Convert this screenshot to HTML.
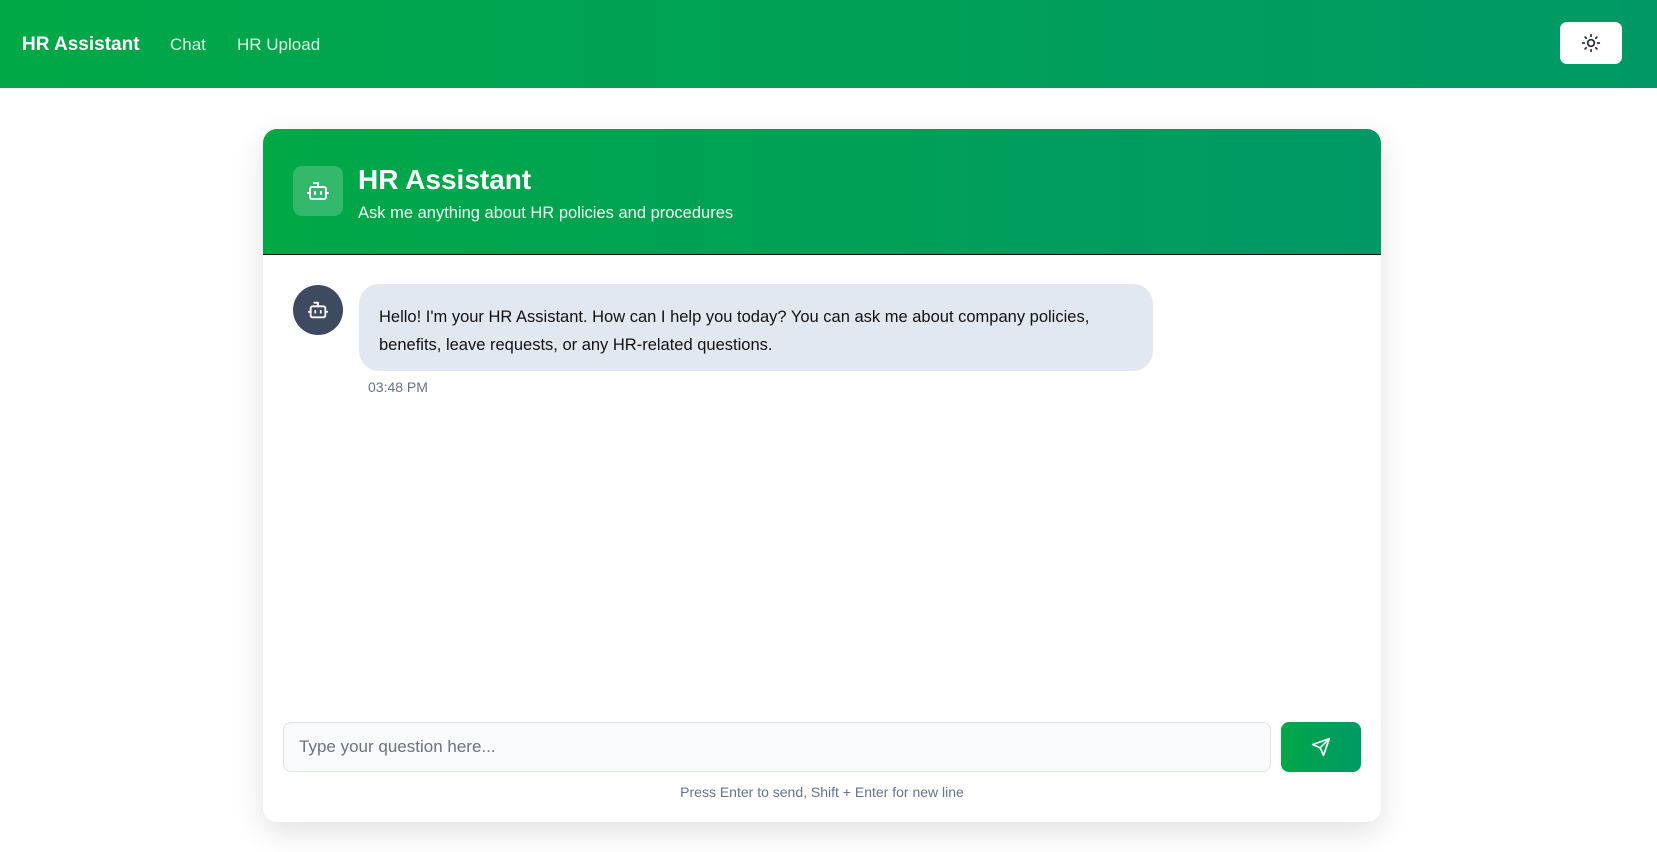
<!DOCTYPE html>
<html><head><style>
*{box-sizing:border-box;margin:0;padding:0}
body{width:1657px;height:852px;background:#fff;font-family:"Liberation Sans",sans-serif;overflow:hidden;position:relative}
.nav{height:88px;background:linear-gradient(90deg,#00a846,#009966);position:relative}
.nav .b{position:absolute;left:22px;top:34px;color:#fff;font-weight:bold;font-size:19px}
.nav .l{position:absolute;top:35px;color:#d6f5e2;font-size:17px}
.tog{position:absolute;left:1560px;top:22px;width:62px;height:42px;background:#fff;border-radius:7px}
.card{position:absolute;left:263px;top:129px;width:1118px;height:693px;background:#fff;border-radius:14px;box-shadow:0 10px 30px rgba(0,0,0,.12);overflow:hidden}
.hd{height:126px;background:linear-gradient(90deg,#00a846,#009966);border-bottom:1px solid #111;position:relative}
.ic{position:absolute;left:30px;top:37px;width:50px;height:50px;border-radius:9px;background:rgba(255,255,255,.2)}
.hd h1{position:absolute;left:95px;top:35px;color:#fff;font-size:28px;font-weight:bold}
.hd p{position:absolute;left:95px;top:75px;color:#eafff2;font-size:16.5px}
.av{position:absolute;left:30px;top:156px;width:50px;height:50px;border-radius:50%;background:#3d4a5f}
.bub{position:absolute;left:96px;top:155px;width:794px;height:87px;background:#e2e8f0;border-radius:20px;padding:19px 20px;font-size:16.5px;line-height:28px;color:#111}
.tm{position:absolute;left:105px;top:250px;font-size:14px;color:#64748b}
.in{position:absolute;left:20px;top:593px;width:988px;height:50px;border:1px solid #dde3ec;background:#f8fafc;border-radius:8px;padding:14px 15px;font-size:17px;color:#6b7280}
.sd{position:absolute;left:1018px;top:593px;width:80px;height:50px;border-radius:8px;background:linear-gradient(90deg,#00a846,#009966)}
.ft{position:absolute;left:0;width:100%;top:655px;text-align:center;font-size:14px;color:#64748b}
</style></head><body>
<div class="nav"><span class="b">HR Assistant</span><span class="l" style="left:170px">Chat</span><span class="l" style="left:237px">HR Upload</span>
<div class="tog"><svg style="position:absolute;left:21px;top:11px" width="20" height="20" viewBox="0 0 24 24" fill="none" stroke="#1e293b" stroke-width="2" stroke-linecap="round"><circle cx="12" cy="12" r="4"/><path d="M12 2v2M12 20v2M4.9 4.9l1.4 1.4M17.7 17.7l1.4 1.4M2 12h2M20 12h2M6.3 17.7l-1.4 1.4M19.1 4.9l-1.4 1.4"/></svg></div></div>
<div class="card">
<div class="hd"><div class="ic"><svg style="position:absolute;left:13px;top:13px" width="24" height="24" viewBox="0 0 24 24" fill="none" stroke="#fff" stroke-width="2" stroke-linecap="round" stroke-linejoin="round"><path d="M12 8V4H8"/><rect x="4" y="8" width="16" height="12" rx="2"/><path d="M2 14h2M20 14h2M15 13v2M9 13v2"/></svg></div>
<h1>HR Assistant</h1><p>Ask me anything about HR policies and procedures</p></div>
<div class="av"><svg style="position:absolute;left:14px;top:14px" width="22" height="22" viewBox="0 0 24 24" fill="none" stroke="#fff" stroke-width="2" stroke-linecap="round" stroke-linejoin="round"><path d="M12 8V4H8"/><rect x="4" y="8" width="16" height="12" rx="2"/><path d="M2 14h2M20 14h2M15 13v2M9 13v2"/></svg></div>
<div class="bub">Hello! I'm your HR Assistant. How can I help you today? You can ask me about company policies, benefits, leave requests, or any HR-related questions.</div>
<div class="tm">03:48 PM</div>
<div class="in">Type your question here...</div>
<div class="sd"><svg style="position:absolute;left:30px;top:15px" width="20" height="20" viewBox="0 0 24 24" fill="none" stroke="#fff" stroke-width="2" stroke-linecap="round" stroke-linejoin="round"><path d="M22 2L11 13M22 2l-7 20-4-9-9-4z"/></svg></div>
<div class="ft">Press Enter to send, Shift + Enter for new line</div>
</div>
</body></html>
